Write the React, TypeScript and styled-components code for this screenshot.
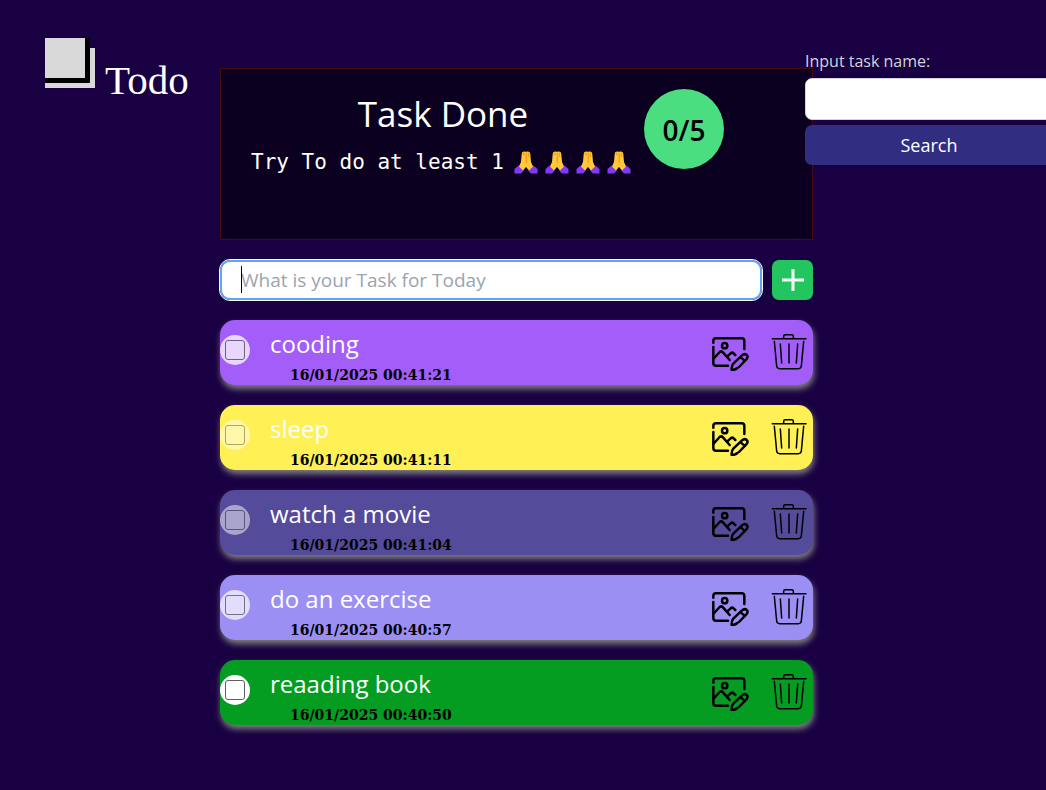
import React from "react";
import styled, { createGlobalStyle } from "styled-components";

const sans = `"Open Sans", "Noto Sans", sans-serif`;

const GlobalStyle = createGlobalStyle`
  *, *::before, *::after { box-sizing: border-box; }
  body { margin: 0; background: #190042; font-family: ${sans}; }
  h1, h2, p, ul { margin: 0; padding: 0; font-weight: 400; }
  button, input { font: inherit; }
`;

const Page = styled.div`
  display: grid;
  grid-template-columns: 220px minmax(0, 1fr) 233px;
  align-items: start;
  min-height: 100vh;
  overflow: hidden;
`;

const Brand = styled.header`
  display: flex;
  align-items: flex-start;
  gap: 10px;
  padding: 38px 0 0 45px;
`;

const BrandName = styled.h1`
  padding-top: 18px;
  color: #fff;
  font-family: "Liberation Serif", serif;
  font-size: 41px;
  line-height: 48px;
`;

const Main = styled.main`
  display: flex;
  flex-direction: column;
  gap: 20px;
  padding: 68px 0 60px;
`;

const Summary = styled.section`
  display: flex;
  align-items: flex-start;
  gap: 9px;
  height: 172px;
  padding: 20px 30px;
  border: 1px solid #480b10;
  background: #0b001f;
`;

const SummaryText = styled.div`
  display: flex;
  flex-direction: column;
  align-items: center;
  gap: 8px;
  color: #fff;
`;

const SummaryTitle = styled.h2`
  font-size: 35px;
  line-height: 50px;
`;

const Hint = styled.p`
  display: flex;
  align-items: center;
  justify-content: space-between;
  width: 384px;
  font-family: "DejaVu Sans Mono", monospace;
  font-size: 21px;
  line-height: 30px;
  white-space: nowrap;
`;

const Hands = styled.span`
  display: flex;
  gap: 7px;
  padding-right: 4px;
`;

const Score = styled.div`
  display: flex;
  align-items: center;
  justify-content: center;
  width: 80px;
  height: 80px;
  padding-top: 2px;
  border-radius: 50%;
  background: #4ade80;
  color: #000;
  font-size: 28px;
  font-weight: 600;
  line-height: 32px;
`;

const NewTaskForm = styled.form`
  display: flex;
  gap: 10px;
`;

const NewTaskField = styled.div`
  position: relative;
  flex: 1;
  height: 40px;
`;

const NewTaskInput = styled.input`
  display: block;
  width: 100%;
  height: 40px;
  padding: 0 19px;
  border: 2px solid #60a5fa;
  border-radius: 10px;
  outline: 1px solid #fff;
  background: #fff;
  color: #111827;
  font-size: 19px;
  caret-color: transparent;
  &::placeholder { color: #9ca3af; opacity: 1; }
`;

const Caret = styled.span`
  position: absolute;
  top: 6px;
  left: 21px;
  width: 1px;
  height: 27px;
  background: #000;
`;

const AddButton = styled.button`
  display: flex;
  align-items: center;
  justify-content: center;
  width: 41px;
  height: 40px;
  padding: 0;
  border: 0;
  border-radius: 7px;
  background: #22c55e;
`;

const TaskList = styled.ul`
  display: flex;
  flex-direction: column;
  gap: 20px;
  list-style: none;
`;

const Task = styled.li<{ $color: string }>`
  display: flex;
  align-items: flex-start;
  height: 65px;
  padding-right: 6px;
  border-radius: 15px;
  background: ${(p) => p.$color};
  box-shadow: 1px 4px 6px #808080;
`;

const Tick = styled.input<{ $opacity: number }>`
  appearance: none;
  flex: none;
  width: 30px;
  height: 30px;
  margin: 15px 20px 0 0;
  padding: 5px;
  border-radius: 50%;
  background: #fff;
  opacity: ${(p) => p.$opacity};
  &::before {
    content: "";
    display: block;
    height: 20px;
    border: 1px solid #5f5f5f;
    border-radius: 3px;
  }
  &:checked::before { background: #5f5f5f; }
`;

const TaskBody = styled.div`
  flex: 1;
  padding-top: 8px;
`;

const TaskName = styled.label`
  display: block;
  color: #fff;
  font-size: 24px;
  line-height: 32px;
`;

const TaskTime = styled.time`
  display: block;
  padding: 6px 0 0 20px;
  color: #000;
  font-family: "DejaVu Serif", serif;
  font-size: 14px;
  font-weight: 700;
  line-height: 19px;
`;

const TaskActions = styled.div`
  display: flex;
  align-items: flex-start;
  gap: 22px;
  padding-top: 13px;
`;

const IconButton = styled.button`
  display: block;
  padding: 0;
  border: 0;
  background: none;
  color: #000;
  svg { display: block; }
`;

const SearchPanel = styled.form`
  display: flex;
  flex-direction: column;
  gap: 5px;
  width: 248px;
  margin: 49px 0 0 -8px;
`;

const SearchLabel = styled.label`
  color: #d1d5db;
  font-size: 16px;
  line-height: 24px;
`;

const SearchInput = styled.input`
  height: 42px;
  padding: 0 12px;
  border: 1px solid #d1d5db;
  border-radius: 7px;
  background: #fff;
`;

const SearchButton = styled.button`
  height: 40px;
  padding: 0;
  border: 0;
  border-radius: 7px;
  background: #312e81;
  color: #fff;
  font-size: 18px;
  line-height: 40px;
`;

const Logo = () => (
  <svg width="50" height="50" viewBox="0 0 50 50" aria-hidden="true">
    <path d="M0 10H50V50H0Z" fill="#d9d9d9" />
    <path d="M0 0H45V45H0Z" fill="#000" />
    <path d="M0 0H40V40H0Z" fill="#d9d9d9" />
  </svg>
);

const FoldedHands = () => (
  <svg width="24" height="24" viewBox="0 0 24 24" aria-hidden="true">
    <path d="M.5 23.500V19L4 16L6 15.500L9.500 19V21L7 23.500Z" fill="#8338f5" />
    <path d="M23.500 23.500V19L20 16L18 15.500L14.500 19V21L17 23.500Z" fill="#8338f5" />
    <path
      d="M12 2C10 1 8 1.500 7.700 4L7 12L5 16.500L9 20.500L12 17L15 20.500L19 16.500L17 12L16.300 4C16 1.500 14 1 12 2Z"
      fill="#ffc83d"
    />
    <path d="M12.300 2.500V13M8.500 4.500H11M9.500 2.500V5M14.500 2.500V7" stroke="#f59e0b" strokeWidth="1.200" fill="none" />
  </svg>
);

const Plus = () => (
  <svg width="22" height="22" viewBox="0 0 22 22" stroke="#fff" strokeWidth="3" aria-hidden="true">
    <path d="M0 11H22M11 0V22" />
  </svg>
);

const EditPictureIcon = () => (
  <svg
    width="38"
    height="38"
    viewBox="0 -9 114 114"
    fill="none"
    stroke="currentColor"
    strokeWidth="7.500"
    strokeLinecap="round"
    strokeLinejoin="round"
    aria-hidden="true"
  >
    <path d="M7 20V15Q7 7 15 7H92Q100 7 100 15V39" />
    <path d="M7 33V81Q7 89 15 89H51" />
    <circle cx="41" cy="29" r="8" />
    <path d="M7 69L26 48Q31 44 36 49L56 72" />
    <path d="M48 62L59 52Q64 48 68 52L73 57" />
    <path d="M84 93L106 70Q113 62 107 57Q101 51 93 58L67 83Q61 89 62 102Q73 102 79 96M89 64L97 71" />
  </svg>
);

const TrashIcon = () => (
  <svg
    width="36"
    height="38"
    viewBox="0 0 108 114"
    fill="none"
    stroke="currentColor"
    strokeWidth="4.500"
    strokeLinecap="round"
    strokeLinejoin="round"
    aria-hidden="true"
  >
    <path d="M4 17H105M38 17V10Q38 5 43 5H62Q67 5 67 10V17" />
    <path d="M10 25L17 99Q18 107 26 107H82Q90 107 91 99L98 25" />
    <path d="M28 33L32 90M54 33V90M80 33L76 90" />
  </svg>
);

const tasks = [
  { name: "cooding", time: "16/01/2025 00:41:21", color: "#a35df9", opacity: 0.75 },
  { name: "sleep", time: "16/01/2025 00:41:11", color: "#fff155", opacity: 0.5 },
  { name: "watch a movie", time: "16/01/2025 00:41:04", color: "#544b9a", opacity: 0.5 },
  { name: "do an exercise", time: "16/01/2025 00:40:57", color: "#9c8ff3", opacity: 0.7 },
  { name: "reaading book", time: "16/01/2025 00:40:50", color: "#049d22", opacity: 1 },
];

export default function App() {
  return (
    <>
      <GlobalStyle />
      <Page>
        <Brand>
          <Logo />
          <BrandName>Todo</BrandName>
        </Brand>
        <Main>
          <Summary>
            <SummaryText>
              <SummaryTitle>Task Done</SummaryTitle>
              <Hint>
                Try To do at least 1
                <Hands>
                  <FoldedHands />
                  <FoldedHands />
                  <FoldedHands />
                  <FoldedHands />
                </Hands>
              </Hint>
            </SummaryText>
            <Score>0/5</Score>
          </Summary>
          <NewTaskForm onSubmit={(e) => e.preventDefault()}>
            <NewTaskField>
              <NewTaskInput aria-label="New task" placeholder="What is your Task for Today" />
              <Caret />
            </NewTaskField>
            <AddButton aria-label="Add task">
              <Plus />
            </AddButton>
          </NewTaskForm>
          <TaskList>
            {tasks.map((task, i) => (
              <Task key={task.time} $color={task.color}>
                <Tick type="checkbox" id={`task-${i}`} $opacity={task.opacity} />
                <TaskBody>
                  <TaskName htmlFor={`task-${i}`}>{task.name}</TaskName>
                  <TaskTime>{task.time}</TaskTime>
                </TaskBody>
                <TaskActions>
                  <IconButton aria-label={`Edit ${task.name}`}>
                    <EditPictureIcon />
                  </IconButton>
                  <IconButton aria-label={`Delete ${task.name}`}>
                    <TrashIcon />
                  </IconButton>
                </TaskActions>
              </Task>
            ))}
          </TaskList>
        </Main>
        <SearchPanel onSubmit={(e) => e.preventDefault()}>
          <SearchLabel htmlFor="task-search">Input task name:</SearchLabel>
          <SearchInput id="task-search" type="text" />
          <SearchButton>Search</SearchButton>
        </SearchPanel>
      </Page>
    </>
  );
}
